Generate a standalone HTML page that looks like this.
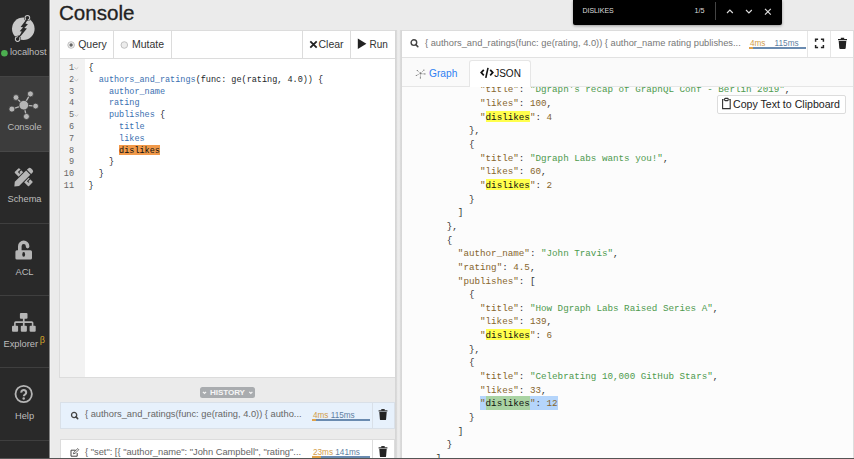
<!DOCTYPE html>
<html><head><meta charset="utf-8">
<style>
*{box-sizing:border-box;margin:0;padding:0}
html,body{width:854px;height:459px;overflow:hidden}
body{position:relative;background:#ebebeb;font-family:"Liberation Sans",sans-serif;color:#212529}
.a{position:absolute}
#side{left:0;top:0;width:49px;height:459px;background:#292929}
#side .it{position:absolute;left:0;width:49px;color:#bdbdbd;font-size:10px;text-align:center}
#side .lbl{position:absolute;left:0;width:49px;text-align:center;white-space:nowrap}
.sep{position:absolute;left:0;width:49px;height:1px;background:#3f3f3f}
#title{left:59px;top:-0.8px;font-size:20.6px;line-height:28px;color:#222;-webkit-text-stroke:0.3px #222}
#lp{left:59px;top:30px;width:337px;height:348px;background:#fff;border:1px solid #dcdcdc}
.hd{position:absolute;top:0;height:28px;border-right:1px solid #dcdcdc;font-size:10.5px;color:#333;line-height:27px;white-space:nowrap}
#gut{position:absolute;left:0;top:28px;width:25.3px;height:318px;background:#f2f2f2}
.code{position:absolute;z-index:0;font-family:"Liberation Mono",monospace;font-size:8.5px;line-height:11.8px;white-space:pre}
.ln{position:absolute;left:0;width:14px;text-align:right;font-family:"Liberation Mono",monospace;font-size:8.5px;line-height:11.8px;color:#333}
.kw{color:#3a6fb0}
#split{left:395px;top:30px;width:7px;height:429px;background:linear-gradient(to right,#d4d4d4,#dadada 22%,#ececec 38%,#ececec 62%,#dadada 80%,#d6d6d6)}
#rp{left:402px;top:30px;width:452px;height:429px;background:#fcfcfc;border-top:1px solid #dcdcdc;border-right:1px solid #ddd}
.json{position:absolute;font-family:"Liberation Mono",monospace;font-size:9.24px;line-height:13.65px;white-space:pre;color:#333}
.k{color:#86652c}.s{color:#4e9a4e}.n{color:#86652c}
.hl{background:linear-gradient(to bottom,#ffff4d calc(100% - 1px),transparent calc(100% - 1px));padding-top:1px;color:#111}
.sel{background:#b5d5fb;padding:2.4px 0 0.4px}
.hl2{background:#a9d3a3;color:#111;padding:2.4px 0 0.4px}
.hi{left:24px;top:0;height:25px;line-height:25px;font-size:9.3px;color:#666;white-space:nowrap}
.tm{top:0;height:25px;line-height:25px;font-size:8.2px;white-space:nowrap}
</style></head><body>

<div id="side" class="a">
  <div class="it" style="top:76px;height:76px;background:#3c3c3c"></div><div class="sep" style="top:76px;background:#444"></div><div class="sep" style="top:151px;background:#474747"></div>
  <div class="sep" style="top:223px"></div>
  <div class="sep" style="top:295px"></div>
  <div class="sep" style="top:367px"></div>
  <div class="sep" style="top:440px"></div>
  <svg class="a" style="left:0;top:0" width="49" height="459" viewBox="0 0 49 459">
    <g fill="#c9c9c9">
      <circle cx="23.3" cy="28.7" r="11.3"/>
      <circle cx="27.4" cy="17.8" r="3.3" fill="#292929"/>
      <circle cx="17.6" cy="39.1" r="3.3" fill="#292929"/>
      <circle cx="27.4" cy="17.8" r="2.8"/>
      <circle cx="17.6" cy="39.1" r="2.8"/>
      <circle cx="27.4" cy="17.8" r="1.8" fill="#292929"/>
      <circle cx="17.6" cy="39.1" r="1.8" fill="#292929"/>
      <path d="M27.2 18.5 L26.6 20.5 M19.6 35.5 L17.8 38.6" stroke="#292929" stroke-width="1.5"/>
      <polygon points="26.3,19.6 27.6,19.9 25.4,23.6 27.9,24.2 24.3,27.9 26.9,28.4 20.6,36.2 19.4,36.0 21.8,31.4 19.7,31.2 23.1,27.3 20.6,27.0" fill="#292929"/>
    </g>
    <g fill="#b5b5b5" stroke="#b5b5b5" stroke-width="1.3">
      <path d="M23.8 105.2 L16 97.5 M23.8 105.2 L30.4 93.9 M23.8 105.2 L35.6 106.1 M23.8 105.2 L11.9 109.1 M23.8 105.2 L26.4 116.5" fill="none"/>
      <g stroke="#3c3c3c" stroke-width="0.8">
      <circle cx="23.8" cy="105.2" r="4.8"/>
      <circle cx="16" cy="97.5" r="2.9"/>
      <circle cx="30.4" cy="93.9" r="3"/>
      <circle cx="35.6" cy="106.1" r="2.9"/>
      <circle cx="11.9" cy="109.1" r="3"/>
      <circle cx="26.4" cy="116.5" r="3"/>
      </g>
    </g>
    <g fill="#b5b5b5">
      <g transform="translate(23.7,177.2) rotate(45)">
        <rect x="-10" y="-3.2" width="20" height="6.4" rx="0.8"/>
        <path d="M-7.2 -3.3 v3.3 h1.9 M5.6 -3.3 v3.3 h1.9" fill="none" stroke="#292929" stroke-width="1.05"/>
      </g>
      <g transform="translate(23.7,177.2) rotate(-45)">
        <path d="M-14.2 0 L-10 -4 L11.2 -4 A1 1 0 0 1 12.2 -3 L12.2 3 A1 1 0 0 1 11.2 4 L-10 4 Z" fill="#292929"/>
        <path d="M-13.2 0 L-9.6 -3 L6.4 -3 L6.4 3 L-9.6 3 Z"/>
        <path d="M7.5 -3 L9.4 -3 A2.1 2.1 0 0 1 11.5 -0.9 L11.5 0.9 A2.1 2.1 0 0 1 9.4 3 L7.5 3 Z"/>
      </g>
    </g>
    <g fill="#b5b5b5">
      <rect x="15.4" y="250.3" width="16.6" height="9.3" rx="1.5"/>
      <path d="M19.8 250.8 V246.2 A3.9 3.9 0 0 1 27.6 246.2 V246.6" fill="none" stroke="#b5b5b5" stroke-width="3.6" stroke-linecap="round"/>
      <ellipse cx="23.7" cy="254.4" rx="1.4" ry="2.4" fill="#292929"/>
    </g>
    <g fill="#b5b5b5">
      <rect x="19.9" y="312.9" width="7.6" height="5.9" rx="1"/>
      <rect x="22.9" y="318" width="1.7" height="8"/>
      <path d="M14.9 326 V322.9 A0.8 0.8 0 0 1 15.7 322.1 H31.8 A0.8 0.8 0 0 1 32.6 322.9 V326" fill="none" stroke="#b5b5b5" stroke-width="1.6"/>
      <rect x="12" y="325.7" width="6.1" height="6.1" rx="1"/>
      <rect x="20.8" y="325.7" width="6.1" height="6.1" rx="1"/>
      <rect x="29.6" y="325.7" width="6.1" height="6.1" rx="1"/>
    </g>
    <g>
      <circle cx="23.7" cy="394" r="8.2" fill="none" stroke="#b5b5b5" stroke-width="1.8"/>
      <path d="M21.3 392.6 A2.45 2.45 0 1 1 25.2 394.4 Q23.8 395.1 23.8 396.3" fill="none" stroke="#b5b5b5" stroke-width="2.1"/>
      <circle cx="23.7" cy="398.6" r="1.25" fill="#b5b5b5"/>
    </g>
    <circle cx="4.4" cy="53.2" r="3.3" fill="#4caf50"/>
  </svg>
  <div class="lbl" style="top:45.7px;left:10px;width:40px;text-align:left;font-size:9.3px;line-height:12px;color:#bdbdbd">localhost</div>
  <div class="lbl" style="top:120.8px;font-size:9.3px;line-height:12px;color:#bdbdbd">Console</div>
  <div class="lbl" style="top:192.8px;font-size:9.3px;line-height:12px;color:#bdbdbd">Schema</div>
  <div class="lbl" style="top:265.6px;font-size:9.3px;line-height:12px;color:#bdbdbd">ACL</div>
  <div class="lbl" style="top:337.8px;left:3.5px;width:40px;text-align:left;font-size:9.3px;line-height:12px;color:#bdbdbd">Explorer<span style="position:absolute;left:36.2px;top:-3.6px;color:#d4a22a;font-size:9px">&beta;</span></div>
  <div class="lbl" style="top:409.7px;font-size:9.3px;line-height:12px;color:#bdbdbd">Help</div>
</div>
<div class="a" style="left:49px;top:0;width:1px;height:459px;background:#858585"></div><div class="a" style="left:50px;top:0;width:1px;height:459px;background:#f0f0f0"></div>

<div id="title" class="a">Console</div>

<div id="lp" class="a">
  <div class="hd" style="left:0;width:54px"><svg class="a" style="left:6px;top:9px" width="10" height="10" viewBox="0 0 10 10"><circle cx="5.1" cy="5" r="3.3" fill="#f4f4f4" stroke="#b0b0b0" stroke-width="0.8"/><circle cx="5.1" cy="5" r="1.7" fill="#666"/></svg><span class="a" style="left:18.2px;top:0">Query</span></div>
  <div class="hd" style="left:54px;width:58px"><svg class="a" style="left:5px;top:9px" width="10" height="10" viewBox="0 0 10 10"><circle cx="5.3" cy="5" r="3.3" fill="#ececec" stroke="#b4b4b4" stroke-width="0.8"/></svg><span class="a" style="left:18px;top:0">Mutate</span></div>
  <div class="hd" style="left:242px;width:49px;border-left:1px solid #dcdcdc"><svg class="a" style="left:5.5px;top:8.8px" width="9" height="9" viewBox="0 0 9 9"><path d="M1.3 1.3 L7.7 7.7 M7.7 1.3 L1.3 7.7" stroke="#222" stroke-width="1.8"/></svg><span class="a" style="left:15.5px;top:0">Clear</span></div>
  <div class="hd" style="left:290px;width:45px;border-left:1px solid #dcdcdc;border-right:0"><svg class="a" style="left:6px;top:7px" width="10" height="12" viewBox="0 0 10 12"><path d="M0.8 0.6 L9.4 5.7 L0.8 10.9 Z" fill="#222"/></svg><span class="a" style="left:18.5px;top:0;font-size:10px">Run</span></div>
  <div class="a" style="left:0;top:27px;width:335px;height:1px;background:#dcdcdc"></div>
  <div id="gut"></div>
  <div class="ln" style="left:0;top:32px;width:14px;color:#666">1
2
3
4
5
6
7
8
9
10
11</div>
  <svg class="a" style="left:13.8px;top:33.6px" width="6" height="70"><path d="M0.3 2.4 L2.3 4 L4.3 2.4 M0.3 14.2 L2.3 15.8 L4.3 14.2 M0.3 49.6 L2.3 51.2 L4.3 49.6" fill="none" stroke="#c4c4c4" stroke-width="0.9"/></svg>
  <div class="code" style="left:28.5px;top:32px">{
  <span class="kw">authors_and_ratings</span>(func: ge(rating, 4.0)) {
    <span class="kw">author_name</span>
    <span class="kw">rating</span>
    <span class="kw">publishes</span> {
      <span class="kw">title</span>
      <span class="kw">likes</span>
      <span style="position:relative;color:#111"><span style="position:absolute;left:0;right:0;top:-0.4px;height:10px;background:#f0994a;z-index:-1"></span>dislikes</span>
    }
  }
}</div>
</div>
<div class="a" style="left:200px;top:387px;width:55px;height:11px;background:#a9acaf;border-radius:2.5px"></div>
<svg class="a" style="left:200px;top:387px" width="55" height="11"><path d="M2.9 4.9 L4.5 6.4 L6.1 4.9 M49.2 4.9 L50.8 6.4 L52.4 4.9" fill="none" stroke="#f4f4f4" stroke-width="1.2"/></svg>
<div class="a" style="left:209px;top:387px;width:37px;height:11px;line-height:11.4px;font-size:8.1px;font-weight:bold;color:#f6f6f6;text-align:center;letter-spacing:-0.1px">HISTORY</div>

<div class="a" style="left:60px;top:402px;width:335px;height:27px;background:#e7f1fc;border:1px solid #d9e0e8">
  <svg class="a" style="left:9px;top:8px" width="10" height="10" viewBox="0 0 10 10"><circle cx="4.1" cy="4" r="2.6" fill="none" stroke="#444" stroke-width="1.3"/><path d="M6 5.9 L7.7 7.6" stroke="#444" stroke-width="1.5" stroke-linecap="round"/></svg>
  <div class="a hi" style="top:-1px">{ authors_and_ratings(func: ge(rating, 4.0)) { autho...</div>
  <div class="a tm" style="left:252px"><span style="color:#d29c4a">4ms</span> <span style="color:#5f7fa3">115ms</span></div>
  <div class="a" style="left:251px;top:16px;width:4px;height:1.6px;background:#e0a24a"></div>
  <div class="a" style="left:255px;top:16px;width:54px;height:1.6px;background:#6a8bb0"></div>
  <div class="a" style="left:311px;top:0;width:1px;height:25px;background:#d9e0e8"></div>
  <svg class="a" style="left:316px;top:5.2px" width="12" height="13" viewBox="0 0 12 13"><path d="M1.6 2.2 H10.4 V3.4 H1.6 Z M4.3 1 H7.7 V2.2 H4.3 Z" fill="#333"/><path d="M2.3 4 H9.7 L9.1 11.2 A1 1 0 0 1 8.1 12.1 H3.9 A1 1 0 0 1 2.9 11.2 Z" fill="#222"/></svg>
</div>
<div class="a" style="left:60px;top:439px;width:335px;height:27px;background:#fff;border:1px solid #dcdcdc">
  <svg class="a" style="left:9px;top:8px" width="10" height="10" viewBox="0 0 10 10"><path d="M5.6 2.2 H1 V8.2 H7.2 V5" fill="none" stroke="#444" stroke-width="1"/><path d="M3.4 5.8 L3.8 4.3 L7.8 0.6 L8.9 1.7 L5 5.4 Z" fill="none" stroke="#444" stroke-width="0.8"/></svg>
  <div class="a hi">{ "set": [{ "author_name": "John Campbell", "rating"...</div>
  <div class="a tm" style="left:252px"><span style="color:#d29c4a">23ms</span> <span style="color:#5f7fa3">141ms</span></div>
  <div class="a" style="left:251px;top:16px;width:9px;height:1.6px;background:#e0a24a"></div>
  <div class="a" style="left:260px;top:16px;width:49px;height:1.6px;background:#6a8bb0"></div>
  <div class="a" style="left:311px;top:0;width:1px;height:25px;background:#dcdcdc"></div>
  <svg class="a" style="left:316px;top:5.2px" width="12" height="13" viewBox="0 0 12 13"><path d="M1.6 2.2 H10.4 V3.4 H1.6 Z M4.3 1 H7.7 V2.2 H4.3 Z" fill="#333"/><path d="M2.3 4 H9.7 L9.1 11.2 A1 1 0 0 1 8.1 12.1 H3.9 A1 1 0 0 1 2.9 11.2 Z" fill="#222"/></svg>
</div>
<div id="split" class="a"></div>

<div id="rp" class="a"></div>
<div class="a" style="left:402px;top:31px;width:451px;height:27px;background:#fff;border-bottom:1px solid #e2e2e2"></div>
<svg class="a" style="left:409px;top:38px" width="11" height="11" viewBox="0 0 11 11"><circle cx="4.9" cy="4.6" r="2.8" fill="none" stroke="#444" stroke-width="1.4"/><path d="M6.9 6.7 L8.8 8.6" stroke="#444" stroke-width="1.6" stroke-linecap="round"/></svg>
<div class="a" style="left:425px;top:35.1px;height:16px;line-height:16px;font-size:9.3px;color:#777;white-space:nowrap">{ authors_and_ratings(func: ge(rating, 4.0)) { author_name rating publishes...</div>
<div class="a tm" style="left:750px;top:34.9px;height:18px;line-height:18px;font-size:8.2px;color:#d29c4a">4ms</div><div class="a tm" style="left:774.6px;top:34.9px;height:18px;line-height:18px;font-size:8.2px;color:#5f7fa3">115ms</div>
<div class="a" style="left:749px;top:47.3px;width:4px;height:1.6px;background:#e0a24a"></div>
<div class="a" style="left:753px;top:47.3px;width:53px;height:1.6px;background:#6a8bb0"></div>
<div class="a" style="left:807px;top:31px;width:1px;height:26px;background:#e6e6e6"></div>
<svg class="a" style="left:814px;top:38px" width="11" height="11" viewBox="0 0 11 11"><path d="M1.6 3.8 V1.3 H4.1 M6.9 1.3 H9.4 V3.8 M9.4 7 V9.6 H6.9 M4.1 9.6 H1.6 V7" fill="none" stroke="#222" stroke-width="1.5"/></svg>
<div class="a" style="left:830px;top:31px;width:1px;height:26px;background:#e6e6e6"></div>
<svg class="a" style="left:837px;top:37px" width="11" height="13" viewBox="0 0 11 13"><path d="M1 2 H10 V3.3 H1 Z M3.8 0.8 H7.2 V2 H3.8 Z" fill="#222"/><path d="M1.7 3.9 H9.3 L8.7 11.2 A1 1 0 0 1 7.7 12 H3.3 A1 1 0 0 1 2.3 11.2 Z" fill="#222"/></svg>

<div class="a" style="left:402px;top:58px;width:451px;height:29px;background:#fafafa;border-bottom:1px solid #e6e6e6"></div>
<svg class="a" style="left:415px;top:68px" width="11" height="11" viewBox="0 0 11 11"><g stroke="#999" stroke-width="0.7"><path d="M7 4 L8.6 2.4 M7.2 5.8 L9.6 5.9 M5.5 7.3 L5.4 9.6 M3.9 6.3 L1.6 7.3 M4.2 4.4 L2.6 2.8"/></g><circle cx="5.6" cy="5.4" r="1.1" fill="#777"/><g fill="#666"><circle cx="8.9" cy="2.1" r="0.6"/><circle cx="9.9" cy="5.9" r="0.6"/><circle cx="5.4" cy="9.9" r="0.6"/><circle cx="1.3" cy="7.5" r="0.6"/><circle cx="2.3" cy="2.5" r="0.6"/></g></svg>
<div class="a" style="left:429px;top:65.8px;height:16px;line-height:16px;font-size:10.2px;color:#2f80f2;white-space:nowrap">Graph</div>
<div class="a" style="left:469px;top:60px;width:62px;height:27px;background:#fff;border:1px solid #e6e6e6;border-bottom:0;border-radius:3px 3px 0 0"></div>
<svg class="a" style="left:480px;top:66.6px" width="14" height="12" viewBox="0 0 14 12"><path d="M3.8 2.8 L1.2 5.6 L3.8 8.4 M10.2 2.8 L12.8 5.6 L10.2 8.4" fill="none" stroke="#111" stroke-width="1.7"/><path d="M8 0.8 L5.8 10.8" stroke="#111" stroke-width="1.6"/></svg>
<div class="a" style="left:494.2px;top:66px;height:16px;line-height:16px;font-size:10px;color:#111;white-space:nowrap">JSON</div>

<div class="a" style="left:402px;top:87px;width:451px;height:371px;overflow:hidden">
<div class="json" style="left:11.5px;top:-3.7px">            <span class="k">"title"</span>: <span class="s">"Dgraph's recap of GraphQL Conf - Berlin 2019"</span>,
            <span class="k">"likes"</span>: <span class="n">100</span>,
            <span class="k">"<span class="hl">dislikes</span>"</span>: <span class="n">4</span>
          },
          {
            <span class="k">"title"</span>: <span class="s">"Dgraph Labs wants you!"</span>,
            <span class="k">"likes"</span>: <span class="n">60</span>,
            <span class="k">"<span class="hl">dislikes</span>"</span>: <span class="n">2</span>
          }
        ]
      },
      {
        <span class="k">"author_name"</span>: <span class="s">"John Travis"</span>,
        <span class="k">"rating"</span>: <span class="n">4.5</span>,
        <span class="k">"publishes"</span>: [
          {
            <span class="k">"title"</span>: <span class="s">"How Dgraph Labs Raised Series A"</span>,
            <span class="k">"likes"</span>: <span class="n">139</span>,
            <span class="k">"<span class="hl">dislikes</span>"</span>: <span class="n">6</span>
          },
          {
            <span class="k">"title"</span>: <span class="s">"Celebrating 10,000 GitHub Stars"</span>,
            <span class="k">"likes"</span>: <span class="n">33</span>,
            <span class="sel"><span class="k">"<span class="hl2">dislikes</span>"</span>: <span class="n">12</span></span>
          }
        ]
      }
    ]</div>
</div>
<div class="a" style="left:717px;top:95px;width:129px;height:19px;background:#fff;border:1px solid #dcdcdc;border-radius:2px"></div>
<svg class="a" style="left:721px;top:97px" width="11" height="13" viewBox="0 0 11 13"><path d="M2.6 2.6 H1.6 V11.6 H9.2 V2.6 H8.2" fill="none" stroke="#333" stroke-width="1.1"/><rect x="3.6" y="1.4" width="3.6" height="2.2" rx="0.6" fill="none" stroke="#333" stroke-width="1.1"/></svg>
<div class="a" style="left:733px;top:96px;height:17px;line-height:17px;font-size:10.6px;color:#222;white-space:nowrap">Copy Text to Clipboard</div>


<div class="a" style="left:573px;top:0;width:209px;height:25px;background:#000;border-radius:0 0 2px 2px;box-shadow:0 1px 3px rgba(0,0,0,.35)"></div>
<div class="a" style="left:582.5px;top:5px;height:12px;line-height:12px;font-size:7px;color:#ddd;white-space:nowrap;letter-spacing:-0.05px">DISLIKES</div>
<div class="a" style="left:694.5px;top:5px;height:12px;line-height:12px;font-size:7.2px;color:#ddd;white-space:nowrap">1/5</div>
<div class="a" style="left:715px;top:2px;width:1px;height:18px;background:#444"></div>
<svg class="a" style="left:724px;top:6px" width="52" height="12" viewBox="0 0 52 12"><path d="M3 7 L5.9 4 L8.8 7 M22 4 L24.9 7 L27.8 4" fill="none" stroke="#ddd" stroke-width="1.1"/><path d="M41 2.8 L46.8 8.6 M46.8 2.8 L41 8.6" stroke="#ddd" stroke-width="1.2"/></svg>


<div class="a" style="left:0;top:458px;width:854px;height:1px;background:#555"></div>
</body></html>
